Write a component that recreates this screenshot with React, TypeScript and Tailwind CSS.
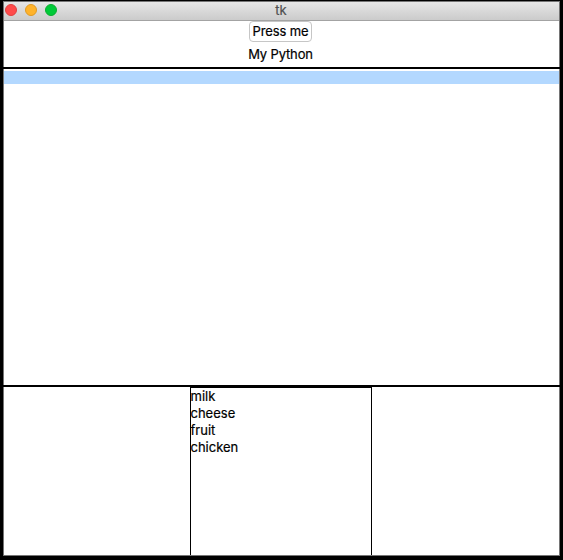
const items = ["milk", "cheese", "fruit", "chicken"];
const lights = [
  { name: "close", style: "bg-[#ff4b4b] border-[#e2403f]" },
  { name: "minimise", style: "bg-[#ffb32b] border-[#e09a22]" },
  { name: "zoom", style: "bg-[#00ca38] border-[#0bac2f]" },
];

function TitleBar() {
  return (
    <header className="grid h-[19px] shrink-0 grid-cols-[1fr_auto_1fr] items-start border-b border-[#a3a3a3] bg-linear-to-b from-[#e6e6e6] to-[#cbcbcb]">
      <div className="flex gap-2 pt-0.5 pl-px">
        {lights.map((l) => (
          <span key={l.name} className={`size-3 rounded-full border ${l.style}`} />
        ))}
      </div>
      <span className="mr-px text-[13px] leading-4 text-[#4f4f4f]">tk</span>
      <span />
    </header>
  );
}

export default function App() {
  return (
    <div className="flex h-[560px] w-[563px] bg-black px-[3px] pt-px pb-1 font-['Inter','Liberation_Sans',sans-serif] text-[13px] text-black [-webkit-text-stroke:0.2px_currentColor]">
      <main className="flex w-full flex-col border border-[#757575] bg-white">
        <TitleBar />
        <section className="flex h-[46px] shrink-0 flex-col items-center pr-0.5">
          <button className="h-[21px] w-[63px] rounded-[4px] border border-[#c6c6c6] bg-white text-[13px] leading-[19px] whitespace-nowrap">
            <span className="-mx-1 tracking-[-0.1px]">Press me</span>
          </button>
          <p className="mt-[3px] leading-[18px] tracking-[-0.15px]">My Python</p>
        </section>
        <section className="-mx-px h-[320px] shrink-0 border-y-2 border-black px-px pt-0.5">
          <div className="h-[13px] bg-[#b3d8ff]" />
        </section>
        <section className="flex min-h-0 flex-1 justify-center pr-0.5">
          <ul className="w-[182px] border-x border-t border-black">
            {items.map((item) => (
              <li key={item} className="h-[17px] leading-4">
                {item}
              </li>
            ))}
          </ul>
        </section>
      </main>
    </div>
  );
}
